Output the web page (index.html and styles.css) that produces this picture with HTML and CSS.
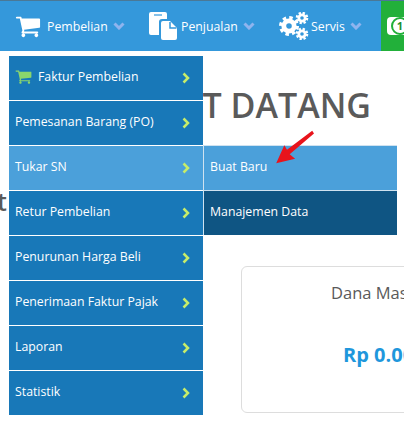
FILE: index.html
```html
<!DOCTYPE html>
<html>
<head>
    <meta charset="utf-8" />
    <title>Dashboard</title>
    <link rel="stylesheet" href="styles.css">
</head>
<body>
    <div class="topbar">
        <a class="nav-item nav-cart">
            <svg class="ico-cart" viewBox="0 0 1792 1792"><path d="M704 1536q0 52-38 90t-90 38-90-38-38-90 38-90 90-38 90 38 38 90zm896 0q0 52-38 90t-90 38-90-38-38-90 38-90 90-38 90 38 38 90zm128-1088v512q0 24-16.5 42.5t-40.5 21.5l-1044 122q13 60 13 70 0 16-24 64h920q26 0 45 19t19 45-19 45-45 19h-1024q-26 0-45-19t-19-45q0-11 8-31.5t16-36 21.5-40 15.5-29.5l-177-823h-204q-26 0-45-19t-19-45 19-45 45-19h256q16 0 28.5 6.5t19.5 15.5 13 24.5 8 26 5.5 29.5 4.5 26h1201q26 0 45 19t19 45z"/></svg>
            <span>Pembelian</span>
            <svg class="caret" viewBox="0 0 12 8"><path d="M1.500 1.500 6 6l4.500-4.500"/></svg>
        </a>
        <a class="nav-item nav-sale">
            <svg class="ico-file" viewBox="0 0 28 28"><path d="M2 0h14q2 0 2 2v5h-5q-3 0-3 3v13H2q-2 0-2-2V2q0-2 2-2z"/><path class="notch" d="M5 3h8"/><path d="M14 9h7l7 7v10q0 2-2 2H14q-2 0-2-2V11q0-2 2-2z"/><path class="fold" d="M21 10v6h6.500"/></svg>
            <span>Penjualan</span>
            <svg class="caret" viewBox="0 0 12 8"><path d="M1.500 1.500 6 6l4.500-4.500"/></svg>
        </a>
        <a class="nav-item nav-serv">
            <svg class="ico-cogs" viewBox="0 0 30 28">
                <circle class="teeth" cx="10" cy="14" r="8" stroke-width="4" stroke-dasharray="3.300 2.980"/>
                <circle class="ring" cx="10" cy="14" r="5.200" stroke-width="4.800"/>
                <circle class="teeth" cx="23" cy="6" r="5" stroke-width="2.600" stroke-dasharray="2.200 1.730"/>
                <circle class="ring" cx="23" cy="6" r="3.200" stroke-width="2.800"/>
                <circle class="teeth" cx="23" cy="22" r="5" stroke-width="2.600" stroke-dasharray="2.200 1.730"/>
                <circle class="ring" cx="23" cy="22" r="3.200" stroke-width="2.800"/>
            </svg>
            <span>Servis</span>
            <svg class="caret" viewBox="0 0 12 8"><path d="M1.500 1.500 6 6l4.500-4.500"/></svg>
        </a>
        <a class="nav-item nav-money">
            <span class="money-note"><span class="money-coin">1</span></span>
        </a>
    </div>

    <div class="content">
        <h1 class="welcome">SELAMAT DATANG</h1>
        <div class="subhead">Dompet</div>
        <div class="card">
            <div class="card-title">Dana Masuk</div>
            <div class="card-value">Rp 0.00</div>
        </div>
    </div>

    <ul class="dropdown">
        <li><svg class="ico-green" viewBox="0 0 1792 1792"><path d="M704 1536q0 52-38 90t-90 38-90-38-38-90 38-90 90-38 90 38 38 90zm896 0q0 52-38 90t-90 38-90-38-38-90 38-90 90-38 90 38 38 90zm128-1088v512q0 24-16.5 42.5t-40.5 21.5l-1044 122q13 60 13 70 0 16-24 64h920q26 0 45 19t19 45-19 45-45 19h-1024q-26 0-45-19t-19-45q0-11 8-31.5t16-36 21.5-40 15.5-29.5l-177-823h-204q-26 0-45-19t-19-45 19-45 45-19h256q16 0 28.5 6.5t19.5 15.5 13 24.5 8 26 5.5 29.5 4.5 26h1201q26 0 45 19t19 45z"/></svg><span class="label">Faktur Pembelian</span><svg class="chev" viewBox="0 0 8 12"><path d="M1.500 1.500 6 6l-4.500 4.500"/></svg></li>
        <li><span class="label">Pemesanan Barang (PO)</span><svg class="chev" viewBox="0 0 8 12"><path d="M1.500 1.500 6 6l-4.500 4.500"/></svg></li>
        <li class="active"><span class="label">Tukar SN</span><svg class="chev" viewBox="0 0 8 12"><path d="M1.500 1.500 6 6l-4.500 4.500"/></svg></li>
        <li><span class="label">Retur Pembelian</span><svg class="chev" viewBox="0 0 8 12"><path d="M1.500 1.500 6 6l-4.500 4.500"/></svg></li>
        <li><span class="label">Penurunan Harga Beli</span><svg class="chev" viewBox="0 0 8 12"><path d="M1.500 1.500 6 6l-4.500 4.500"/></svg></li>
        <li><span class="label">Penerimaan Faktur Pajak</span><svg class="chev" viewBox="0 0 8 12"><path d="M1.500 1.500 6 6l-4.500 4.500"/></svg></li>
        <li><span class="label">Laporan</span><svg class="chev" viewBox="0 0 8 12"><path d="M1.500 1.500 6 6l-4.500 4.500"/></svg></li>
        <li><span class="label">Statistik</span><svg class="chev" viewBox="0 0 8 12"><path d="M1.500 1.500 6 6l-4.500 4.500"/></svg></li>
    </ul>

    <ul class="submenu">
        <li class="sub-new">Buat Baru</li>
        <li class="sub-data">Manajemen Data</li>
    </ul>

    <svg class="arrow" viewBox="0 0 50 40"><path d="M43 2 15 23l-3-5-9 20 21-5-6-5L45 5z"/></svg>
</body>
</html>
```
FILE: styles.css
```css
html, body {
    margin: 0;
    padding: 0;
    height: 100%;
    overflow: hidden;
    background: #fff;
    font-family: "Open Sans", "Liberation Sans", sans-serif;
}

.topbar {
    display: flex;
    height: 50px;
    background: #3498db;
    border-top: 1px solid #4a7896;
    color: #fff;
    font-size: 12.3px;
}

.nav-item {
    display: flex;
    flex: none;
    align-items: center;
    white-space: nowrap;
}

.nav-cart {
    width: 149px;
    padding-left: 15px;
    box-sizing: border-box;
    gap: 6px;
}

.nav-sale {
    width: 130px;
    gap: 4px;
}

.nav-serv {
    width: 102px;
    gap: 2px;
}

.nav-money {
    flex: 1;
    min-width: 0;
    overflow: hidden;
    background: #22b03a;
    padding-left: 6px;
}

.ico-cart {
    width: 26px;
    height: 26px;
    fill: #fff;
}

.ico-file {
    width: 28px;
    height: 28px;
    fill: #fff;
}

.ico-file .fold {
    fill: none;
    stroke: #3498db;
    stroke-width: 1.500;
}

.ico-file .notch {
    fill: none;
    stroke: #3498db;
    stroke-width: 1.200;
}

.ico-cogs {
    width: 30px;
    height: 28px;
}

.teeth, .ring {
    fill: none;
    stroke: #fff;
}

.money-note {
    display: flex;
    flex: none;
    align-items: center;
    width: 30px;
    height: 18px;
    background: #fff;
    border-radius: 4px 0 0 4px;
}

.money-coin {
    width: 14px;
    height: 14px;
    margin-left: 4px;
    border: 2px solid #22b03a;
    border-radius: 50%;
    color: #1c8f30;
    font-size: 11px;
    font-weight: 700;
    line-height: 14px;
    text-align: center;
}

.caret {
    width: 12px;
    height: 8px;
    margin-left: -1px;
    fill: none;
    stroke: #8fb4ee;
    stroke-width: 3;
}

.nav-sale .caret {
    margin-left: 1px;
}

.nav-serv .caret {
    margin-left: 3px;
}

.content {
    height: 372px;
    width: 720px;
    margin-left: -290px;
    color: #5a5a5a;
}

.welcome {
    margin: 0;
    padding-top: 32px;
    text-align: right;
    width: 661px;
    font-size: 34px;
    line-height: 44px;
    font-weight: 600;
}

.subhead {
    margin-top: 57px;
    width: 297px;
    text-align: right;
    font-size: 25px;
    line-height: 34px;
    font-weight: 600;
}

.card {
    margin: 48px 0 0 531px;
    width: 400px;
    height: 147px;
    box-sizing: border-box;
    border: 1px solid #ddd;
    border-radius: 6px;
    padding-top: 13px;
    padding-left: 89px;
}

.card-title {
    font-size: 16.500px;
    line-height: 26px;
}

.card-value {
    margin: 35px 0 0 12px;
    font-size: 20px;
    line-height: 28px;
    font-weight: 700;
    color: #1f97dc;
}

.dropdown, .submenu {
    list-style: none;
    margin: 0;
    padding: 0;
    position: absolute;
    color: #fff;
    font-size: 12.3px;
}

.dropdown {
    left: 9px;
    top: 56px;
    width: 194px;
}

.dropdown li {
    display: flex;
    align-items: center;
    height: 44px;
    padding: 0 13px 0 6px;
    background: #1878b8;
    border-top: 1px solid #fff;
    box-sizing: content-box;
}

.dropdown li:first-child {
    border-top: 0;
}

.dropdown li.active {
    background: #4ba0da;
}

.dropdown .label {
    flex: 1;
    margin-bottom: 3px;
    white-space: nowrap;
}

.ico-green {
    width: 17px;
    height: 17px;
    margin: 0 6px 3px 0;
    fill: #8bd66c;
}

.chev {
    width: 8px;
    height: 12px;
    fill: none;
    stroke: #c6ec6a;
    stroke-width: 2.500;
}

.submenu {
    left: 203px;
    top: 145px;
    width: 194px;
}

.submenu li {
    height: 44px;
    line-height: 42px;
    padding-left: 6px;
    border-top: 1px solid #cfe2f0;
    border-left: 1px solid #cfe2f0;
}

.sub-new {
    background: #4ba0da;
}

.sub-data {
    background: #0f5583;
}

.arrow {
    position: absolute;
    left: 273px;
    top: 129px;
    width: 46px;
    height: 36px;
    fill: #e8141c;
}
```
